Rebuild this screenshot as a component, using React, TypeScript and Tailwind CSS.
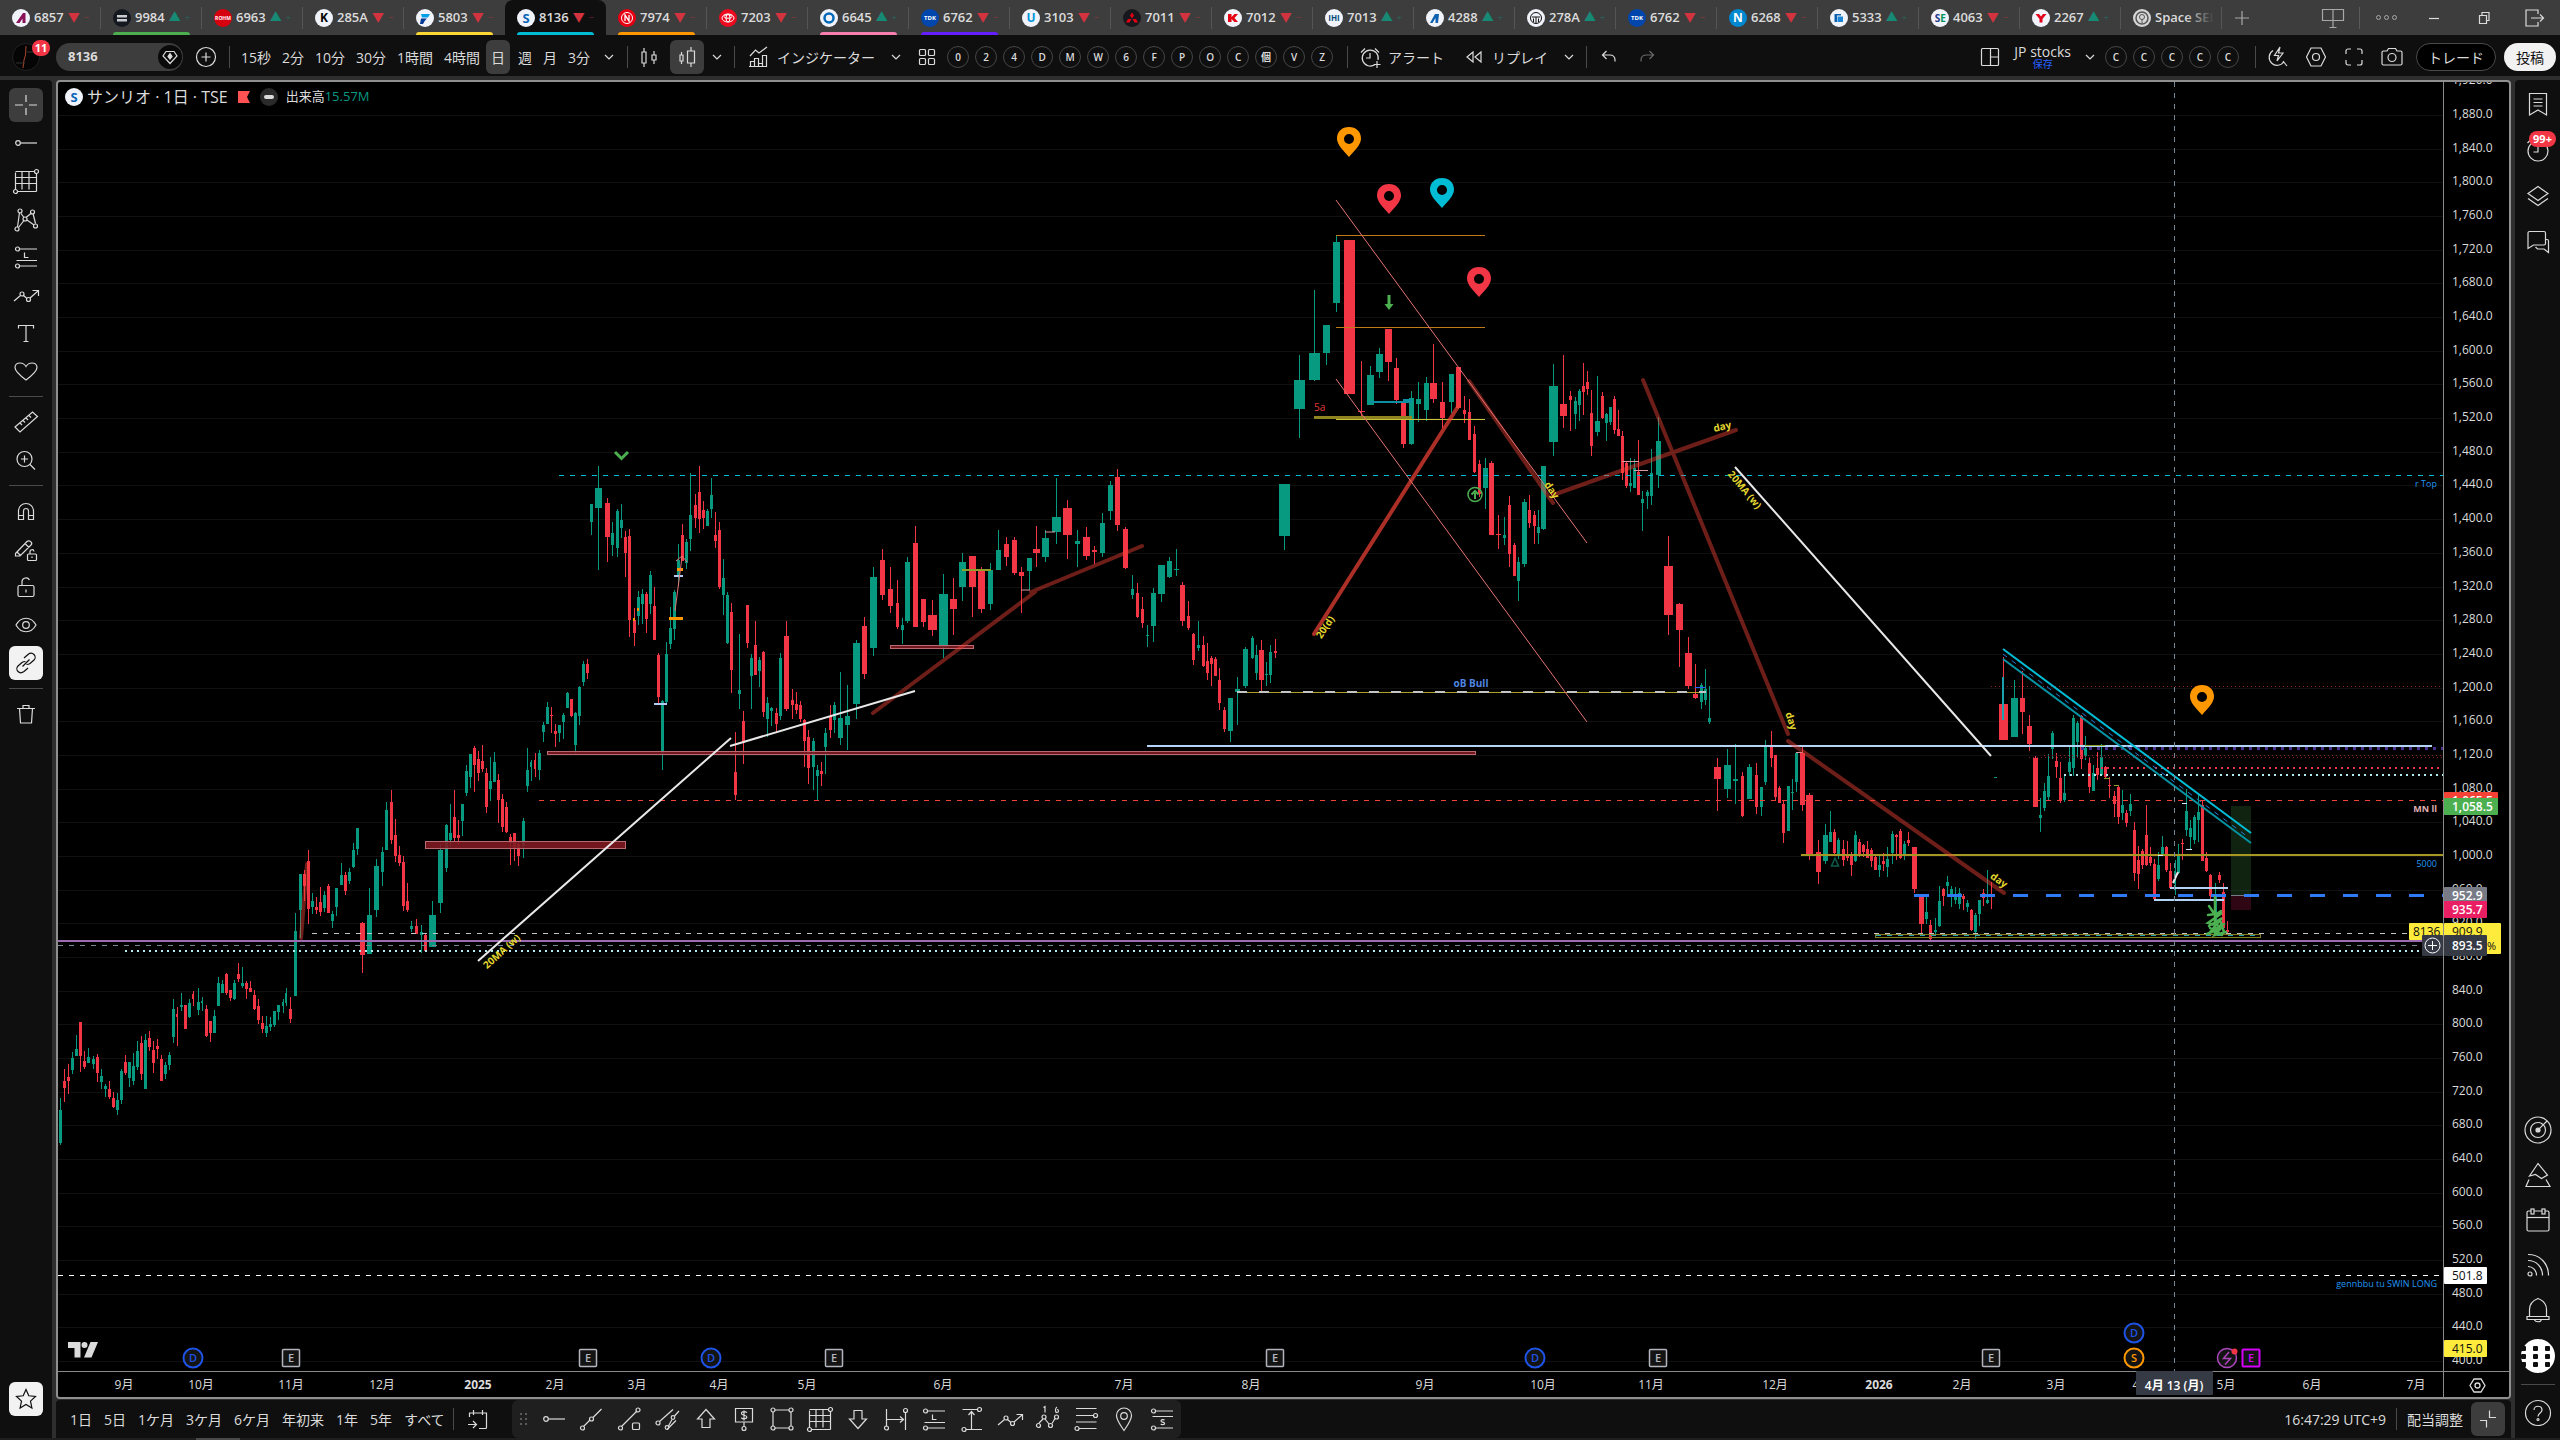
import type { ReactNode } from 'react';
import clsx from 'clsx';

const UP = '#089981';
const DOWN = '#f23645';

/* ---------- icons, all on a 28 grid ---------- */

const ICONS: Record<string, ReactNode> = {
  cross: <path d="M14 4v7M14 17v7M3 14h8M17 14h8" />,
  hline: (
    <>
      <circle cx="6" cy="14" r="2.3" />
      <path d="M8.3 14H25" />
    </>
  ),
  fibgrid: (
    <>
      <path d="M3.5 5.5v17M10 4.5v18M17 4.5v18M24.5 6.5v18M3.5 4.5h19M3.5 10.5h21M3.5 16.5h21M5.5 24.5h19" />
      <circle cx="24.5" cy="4.5" r="2" />
      <circle cx="3.5" cy="24.5" r="2" />
    </>
  ),
  pattern: (
    <>
      <path d="M5.5 22L7.5 7.5M9 8.500l3 4M14 12.5l5.500-4.500M6.500 22.500l5.500-7M15 15l7 5M21 8.500l2.500 10" />
      <circle cx="8" cy="6" r="2" />
      <circle cx="20.5" cy="7" r="2" />
      <circle cx="5" cy="24" r="2" />
      <circle cx="23.5" cy="21" r="2" />
      <circle cx="13" cy="14" r="2" />
    </>
  ),
  longpos: (
    <>
      <path d="M7.5 6H25M4.5 17.5H25M7.5 23H25M12.5 9.5v5h4" />
      <circle cx="5.5" cy="6" r="2" />
      <circle cx="5.5" cy="23" r="2" />
    </>
  ),
  shortpos: (
    <>
      <path d="M7.5 6H25M4.5 11.5H25M7.5 23H25" />
      <path d="M16.5 15.200c-.5-.8-3.500-1-3.500.7 0 1.600 3.600.9 3.600 2.600 0 1.600-3.200 1.500-3.800.4" />
      <circle cx="5.5" cy="6" r="2" />
      <circle cx="5.5" cy="23" r="2" />
    </>
  ),
  zigzag: (
    <>
      <path d="M2 20l6.5-5.5M11.5 14.5l3.5 3M18 17l8-7M20.5 9.5H26.5V15" />
      <circle cx="10" cy="13" r="2" />
      <circle cx="16.5" cy="18.5" r="2" />
    </>
  ),
  text: <path d="M6.5 9.5v-3h15v3M14 6.5v16M11.5 22.5h5" />,
  heart: <path d="M14 23C8 18.5 3 14.5 3 10.5 3 8 5 6 8 6c2.5 0 4.5 1 6 3.5C15.5 7 17.5 6 20 6c3 0 5 2 5 4.5 0 4-5 8-11 12.5z" />,
  ruler: <path d="M3 19L20.5 4l5 4.5L8 24zM8 15l2 2M11 12.5l2 2M14 10l2 2M17 7.5l2 2" />,
  zoomin: (
    <>
      <circle cx="12.5" cy="13" r="7.5" />
      <path d="M18 18.5l5 5M9 13h7M12.5 9.5v7" />
    </>
  ),
  magnet: <path d="M6.5 22.5V14a7.5 7.5 0 0 1 15 0v8.5h-5V14a2.5 2.5 0 0 0-5 0v8.5zM6.5 18.5h5M16.5 18.5h5" />,
  penlock: (
    <>
      <path d="M3.5 18.5L15 6.5c1-1 3-1 4 .5 1 1 .5 2.5 0 3L8 21H3.5zM13 8.5l4 4M5 17l3.5 3.5" />
      <rect x="15.5" y="19" width="9" height="6.5" rx="1" />
      <path d="M18 19v-2a2 2 0 0 1 4-.5M20 21.5v1.5" />
    </>
  ),
  lock: (
    <>
      <rect x="6" y="12.5" width="16" height="11" rx="1.5" />
      <path d="M10 12.5V8.5a4 4 0 0 1 7.5-1.5M14 16.5v3" />
    </>
  ),
  eye: (
    <>
      <path d="M4 14c5-9 15-9 20 0-5 9-15 9-20 0z" />
      <circle cx="14" cy="14" r="3.3" />
    </>
  ),
  link: <path d="M12 9l4-3.5c2-1.6 4.5-1.5 6 0s1.5 4 0 5.5l-4 3.5c-1 .8-2 1-3.5 1M16 19l-4 3.5c-2 1.5-4.5 1.5-6 0s-1.5-4 0-5.500l4-3.5c1-.8 2-1 3.5-1M10.5 17.5l7-7" />,
  trash: <path d="M5 8.5h18M11 8.5v-3h6v3M7.5 8.5l1 14.5h11l1-14.5" />,
  star: <path d="M14 4.5l2.800 6.300 6.700.7-5 4.600 1.400 6.900-5.900-3.500L8.100 23l1.400-6.900-5-4.600 6.700-.7z" />,
  watchlist: <path d="M5.5 3.5h17v21.5l-8.500-5-8.500 5zM9.5 9h9M9.5 12.5h9M9.5 16h9" />,
  clock: (
    <>
      <circle cx="14" cy="15" r="10" />
      <path d="M14 9v7H9.5M3.5 7l3.5-3.5" />
    </>
  ),
  layers: <path d="M14 4.5l10 7-10 7-10-7zM4 16.5l10 7 10-7" />,
  chat: <path d="M5.5 3.5h14.5a1.5 1.5 0 0 1 1.5 1.5v10.5a1.5 1.5 0 0 1-1.500 1.5H9.5L4 20.5V5a1.5 1.5 0 0 1 1.5-1.5zM21.5 11.5h1.5a1.5 1.5 0 0 1 1.5 1.5v11.5l-4.500-3.500h-6.5l-2-2" />,
  radar: (
    <>
      <circle cx="14" cy="14" r="13" />
      <circle cx="14" cy="14" r="7.5" />
      <path d="M14 14l9-9" />
      <circle cx="14" cy="14" r="2" fill="currentColor" />
    </>
  ),
  ideas: <path d="M14 2.500L5.500 15l6-1.500 6 4L23.500 14zM5 18.5L2 25.500h24l-4-7" />,
  calendar: (
    <>
      <rect x="3" y="5" width="22" height="20" rx="1.5" />
      <path d="M3 11.5h22" />
      <rect x="7" y="3" width="3" height="5" fill="#0f0f0f" />
      <rect x="18" y="3" width="3" height="5" fill="#0f0f0f" />
    </>
  ),
  feed: (
    <>
      <path d="M4 3.5c12 0 20.5 9 20.5 21M4 9.5c8.5 0 14.5 6.5 14.5 15M4 15.5c5 0 8.5 4 8.5 9" />
      <circle cx="6" cy="23" r="2" />
    </>
  ),
  bell: <path d="M5.5 20.5v-7C5.5 8 9 4.5 14 2.5c5 2 8.5 5.5 8.5 11v7M3 20.5h22v3H3zM10.5 23.5c.5 3 6.5 3 7 0" />,
  help: (
    <>
      <circle cx="14" cy="14" r="12.5" />
      <path d="M10 11c0-5 8-5 8 0 0 3-4 3-4 6.5" />
      <circle cx="14" cy="20.5" r="1" />
    </>
  ),
  candles: <path d="M9 5v4M9 20v4M7 9h4v11H7zM19 8v4M19 17v4M17 12h4v5h-4z" />,
  candles2: <path d="M8.5 9v3M8.5 18v3M7 12h3v6H7zM18 4v4M18 20v4M14.5 8h7v12h-7z" />,
  indicator: <path d="M5 13l5.5-6 3.5 3 8-6M5.5 23.5v-5h4v5zM9.5 23.5v-8h4v8M13.5 20.5h4v3M17.5 23.5V12.5h4v11zM4 23.5h18" />,
  tiles: (
    <>
      <rect x="6.5" y="6.5" width="6" height="6" rx="1" />
      <rect x="15.5" y="6.5" width="6" height="6" rx="1" />
      <rect x="6.5" y="15.5" width="6" height="6" rx="1" />
      <rect x="15.5" y="15.5" width="6" height="6" rx="1" />
    </>
  ),
  alert: <path d="M19 21.5a8 8 0 1 1 3-4.5M14 10v5h-4M5 9.5l4-4M23 9.5l-4-4M21 18v7M17.5 21.5h7" />,
  rewind: <path d="M13 9l-6 5 6 5zM21 9l-6 5 6 5z" />,
  undo: <path d="M11.5 8l-4 4 4 4M7.5 12h7c3.5 0 5.5 2 5.5 5v1.5" />,
  redo: <path d="M16.5 8l4 4-4 4M20.5 12h-7c-3.5 0-5.5 2-5.5 5v1.5" />,
  layout: <path d="M5.5 6.5a1 1 0 0 1 1-1h15a1 1 0 0 1 1 1v15a1 1 0 0 1-1 1h-15a1 1 0 0 1-1-1zM14.5 5.5v17M14.5 14h8" />,
  quick: <path d="M9 7.5a8 8 0 1 0 11 11M19 18l4 5M16 4l-5.500 8.500h4L13 18l6-8h-4.500z" />,
  hex: (
    <>
      <path d="M9 5h10l4.5 9-4.5 9H9l-4.500-9z" />
      <circle cx="14" cy="14" r="3.5" />
    </>
  ),
  full: <path d="M6 11V8a2 2 0 0 1 2-2h3M17 6h3a2 2 0 0 1 2 2v3M22 17v3a2 2 0 0 1-2 2h-3M11 22H8a2 2 0 0 1-2-2v-3" />,
  camera: (
    <>
      <path d="M4 9.5a1.5 1.5 0 0 1 1.5-1.5H9l1.5-2.500h7L19 8h3.5A1.5 1.5 0 0 1 24 9.5v11a1.5 1.5 0 0 1-1.5 1.5h-17A1.5 1.5 0 0 1 4 20.5z" />
      <circle cx="14" cy="14.5" r="4" />
    </>
  ),
  chevron: <path d="M10 12l4 4 4-4" />,
  goto: <path d="M5.5 12V8h17v14.5a1 1 0 0 1-1 1H15M9.5 5v5M18.5 5v5M4 19.5h8M9 16l3.5 3.5L9 23" />,
  trend: (
    <>
      <path d="M5.5 21.5L12 15M15 12.5L23.5 4" />
      <circle cx="4.5" cy="23" r="2" />
      <circle cx="13.5" cy="14" r="2" />
    </>
  ),
  angle: (
    <>
      <path d="M5.5 21.5L21 6" />
      <circle cx="4.5" cy="23" r="2" />
      <circle cx="22" cy="5" r="2" />
      <rect x="16.5" y="18" width="7" height="6.5" rx="1" />
    </>
  ),
  channel: (
    <>
      <path d="M5.500 16.500L19 4.500M14.500 21L18 14.500M20.500 11L25 6M13 24.500l9-9" />
      <circle cx="4" cy="18" r="2" />
      <circle cx="19" cy="12.5" r="1.8" />
      <circle cx="13" cy="22.5" r="1.8" />
    </>
  ),
  arrowup: <path d="M14 4.5l8.5 9.5H18v8.5h-8V14H5.5z" />,
  arrowdown: <path d="M14 23.5L5.5 14H10V5.5h8V14h4.5z" />,
  price: (
    <>
      <path d="M5.5 3.5h17v13.5h-17zM14 17v4.500M16.800 7.800c-1-1.600-5.300-1.500-5.300.6 0 2.500 5.300 1.200 5.300 3.700 0 2.200-4.500 2.200-5.500.5M14 5.5v10" />
      <circle cx="14" cy="23.5" r="2" />
    </>
  ),
  rect: (
    <>
      <path d="M5 7v14M23 7v14M7 5h14M7 23h14" />
      <circle cx="5" cy="5" r="2" />
      <circle cx="23" cy="5" r="2" />
      <circle cx="5" cy="23" r="2" />
      <circle cx="23" cy="23" r="2" />
    </>
  ),
  daterange: (
    <>
      <path d="M4.5 4v17.5M23.5 7v18M5 14.5h16M18 11.5l3.5 3-3.500 3" />
      <circle cx="4.5" cy="23" r="2" />
      <circle cx="23.5" cy="5.5" r="2" />
    </>
  ),
  pricerange: (
    <>
      <path d="M4.5 4.5h15M8 24.5h16M13.5 24.5V7M10.5 10l3-3.5 3 3.5" />
      <circle cx="21.5" cy="4.5" r="2" />
      <circle cx="6" cy="24.5" r="2" />
    </>
  ),
  elliott: (
    <>
      <path d="M5 18l4-4M11 14l4 5M18 18.500l3-5M9.500 2.500l1.500-1v6M23 2c-2 1-2 5.500 0 5.500s2-3 0-3" />
      <circle cx="4.5" cy="20.5" r="2" />
      <circle cx="10" cy="12" r="2" />
      <circle cx="16.5" cy="20.5" r="2" />
      <circle cx="22.5" cy="12" r="2" />
    </>
  ),
  fib: (
    <>
      <path d="M4 3.5h20.5M4 10.5h17M4 17h20.5M7 23.5h17.5" />
      <circle cx="23.5" cy="10.5" r="2" />
      <circle cx="5" cy="23.5" r="2" />
    </>
  ),
  pin: (
    <>
      <path d="M14 25.5C9.5 19 6.5 15 6.5 10.5a7.5 7.5 0 0 1 15 0c0 4.5-3 8.5-7.500 15z" />
      <circle cx="14" cy="11" r="3.3" />
    </>
  ),
  shrink: <path d="M15.5 5.5v7H22M6 15.5h6.5v7" />,
  monitor: <path d="M3.500 5.500h21v11h-21zM14 5.500v18M10.5 23.5h7" />,
  minimize: <path d="M9 14.5h10" />,
  restore: <path d="M9.5 11.5h7v8h-7zM12 11.5v-3h7v8h-2.5" />,
  exit: <path d="M18 10V6H6v16h12v-4M11 14h12M20 10.5l3.5 3.5-3.500 3.5" />,
  plus: <path d="M14 7v14M7 14h14" />,
};

function Icon({ name, className = 'h-7 w-7' }: { name: string; className?: string }) {
  return (
    <svg viewBox="0 0 28 28" className={clsx('shrink-0', className)} fill="none" stroke="currentColor" strokeWidth="1.2" aria-hidden="true">
      {ICONS[name]}
    </svg>
  );
}

function IconButton({ name, label, className }: { name: string; label: string; className?: string }) {
  return (
    <button type="button" aria-label={label} className={clsx('flex shrink-0 items-center justify-center', className)}>
      <Icon name={name} />
    </button>
  );
}

function Divider({ className }: { className?: string }) {
  return <div className={clsx('h-[22px] w-px shrink-0 bg-[#4a4a4a]', className)} />;
}

/* ---------- tabs ---------- */

type Tab = { code: string; up?: boolean; bar?: string; active?: boolean; bg: string; logo: ReactNode };

const mark = (t: string, fill: string, size = 12) => (
  <text x="9" y={9 + size * 0.36} textAnchor="middle" fontSize={size} fontWeight="700" fill={fill}>
    {t}
  </text>
);
const tdk = mark('TDK', '#fff', 6);

const TABS: Tab[] = [
  { code: '6857', bg: '#f0f3fa', logo: <path d="M4 14l7-10h2.500v10h-3V9.500L7.500 14z" fill="#8a1058" /> },
  { code: '9984', up: true, bar: 'bg-[#4caf50]', bg: '#14181f', logo: <path d="M4 6h10v2.500H4zM4 10h10v2.500H4z" fill="#c8ccd0" /> },
  { code: '6963', up: true, bg: '#d7000f', logo: mark('ROHM', '#fff', 5) },
  { code: '285A', bg: '#f0f3fa', logo: mark('K', '#000', 12) },
  { code: '5803', bar: 'bg-[#fdd835]', bg: '#f0f3fa', logo: <><path d="M5 5h9l-2 3.500H6z" fill="#00a0e9" /><path d="M5 9.500h6l-2 2-2 3.500H4z" fill="#003894" /></> },
  { code: '8136', bar: 'bg-[#00bcd4]', active: true, bg: '#f0f3fa', logo: mark('S', '#0a64b8', 13) },
  { code: '7974', bar: 'bg-[#ff9800]', bg: '#e60012', logo: <><circle cx="9" cy="9" r="5.500" fill="none" stroke="#fff" /><path d="M7 12V6l4 6V6" fill="none" stroke="#fff" strokeWidth="1.300" /></> },
  { code: '7203', bg: '#eb0a1e', logo: <g fill="none" stroke="#fff"><ellipse cx="9" cy="9" rx="6" ry="4" /><ellipse cx="9" cy="9" rx="2" ry="4" /><ellipse cx="9" cy="7.500" rx="4" ry="1.800" /></g> },
  { code: '6645', up: true, bar: 'bg-[#f77fb0]', bg: '#f0f3fa', logo: <circle cx="9" cy="9" r="4.500" fill="none" stroke="#0067b8" strokeWidth="2.500" /> },
  { code: '6762', bar: 'bg-[#651fff]', bg: '#0046ad', logo: tdk },
  { code: '3103', bg: '#f0f3fa', logo: mark('U', '#0095d9', 12) },
  { code: '7011', bg: '#16181d', logo: <path d="M9 3.500l2 3-2 3-2-3zM8.500 10l-2 3.500H3l2-3.500zM9.500 10l2 3.500H15L13 10z" fill="#e60012" /> },
  { code: '7012', bg: '#f0f3fa', logo: <path d="M4 5h3.500v3l3-3H14l-3.500 4 3.500 4h-3.500l-3-3v3H4z" fill="#e60012" /> },
  { code: '7013', up: true, bg: '#f0f3fa', logo: mark('IHI', '#0a4a7a', 8) },
  { code: '4288', up: true, bg: '#f0f3fa', logo: <path d="M4 14l5-9h4l-1 9H9.500V9L6.500 14z" fill="#0d5fb0" /> },
  { code: '278A', up: true, bg: '#f0f3fa', logo: <g fill="none" stroke="#111"><circle cx="9" cy="9" r="5.500" /><path d="M5 8h8M9 8v6M6.500 13V9.500M11.500 13V9.500" /></g> },
  { code: '6762', bg: '#0046ad', logo: tdk },
  { code: '6268', bg: '#0089d0', logo: mark('N', '#fff', 12) },
  { code: '5333', up: true, bg: '#f0f3fa', logo: <><path d="M4.500 5H11v1.500H7V13H4.500z" fill="#0d5fb0" /><path d="M7.500 7.500h5.500V13H7.500z" fill="#1c86d6" /></> },
  { code: '4063', bg: '#f0f3fa', logo: <><text x="6.500" y="12.500" textAnchor="middle" fontSize="10" fontWeight="700" fill="#1d3a8a">S</text><text x="12" y="12.500" textAnchor="middle" fontSize="10" fontWeight="700" fill="#00915a">E</text></> },
  { code: '2267', up: true, bg: '#f0f3fa', logo: <path d="M3.500 5H7l2 2.500L11 5h3.500L10.500 10v3.500h-3V10z" fill="#e3001b" /> },
  { code: 'Space SEI', bg: '#d6d6d6', logo: <g fill="none" stroke="#555"><circle cx="9" cy="9" r="6" strokeWidth="1.500" /><circle cx="9" cy="8" r="2.500" /><path d="M9 10v4" /></g> },
];

function TabBar() {
  return (
    <header className="flex h-[35px] shrink-0 bg-[#3d3d3d]">
      <nav className="flex">
        {TABS.map((t, i) => (
          <button
            key={i}
            type="button"
            className={clsx(
              'relative flex w-[101px] items-center overflow-hidden pl-3 text-[13px] font-semibold whitespace-nowrap text-[#dbdbdb]',
              t.active && 'rounded-t-lg bg-[#0f0f0f]',
            )}
          >
            <svg viewBox="0 0 18 18" className="mr-1 h-[18px] w-[18px] shrink-0">
              <circle cx="9" cy="9" r="9" fill={t.bg} />
              {t.logo}
            </svg>
            {t.code}
            {i < 21 ? (
              <>
                <span className={clsx('ml-1 text-[12px]', t.up ? 'text-[#168a75]' : 'text-[#d3333f]')}>{t.up ? '▲' : '▼'}</span>
                <span className={clsx('ml-1 text-[9px] opacity-40', t.up ? 'text-[#168a75]' : 'text-[#d3333f]')}>{t.up ? '+' : '−'}</span>
              </>
            ) : (
              <span className="absolute inset-y-0 right-2 w-7 bg-linear-to-r from-transparent to-[#3d3d3d]" />
            )}
            {t.bar && <span className={clsx('absolute bottom-0 left-3 h-[3px] w-[77px] rounded-t-sm', t.bar)} />}
            {!t.active && i !== 4 && <span className="absolute top-[7px] right-0 h-[22px] w-px bg-[#555]" />}
          </button>
        ))}
      </nav>
      <div className="flex flex-1 items-center text-[#a8a8a8]">
        <IconButton name="plus" label="新しいタブ" className="ml-1.5 w-7" />
        <div className="ml-auto flex items-center pr-3">
          <IconButton name="monitor" label="モニター" className="w-7" />
          <Divider className="ml-3 bg-[#5a5a5a]" />
          <button type="button" aria-label="メニュー" className="ml-3 flex w-7 justify-center gap-[3px]">
            {[0, 1, 2].map((n) => (
              <span key={n} className="h-[5px] w-[5px] rounded-full border border-[#a8a8a8]" />
            ))}
          </button>
          <div className="ml-5 flex gap-[22px] text-[#dbdbdb]">
            <IconButton name="minimize" label="最小化" />
            <IconButton name="restore" label="元に戻す" />
            <IconButton name="exit" label="閉じる" />
          </div>
        </div>
      </div>
    </header>
  );
}

/* ---------- top toolbar ---------- */

const INTERVALS = ['15秒', '2分', '10分', '30分', '1時間', '4時間', '日', '週', '月', '3分'];
const TEMPLATES = ['0', '2', '4', 'D', 'M', 'W', '6', 'F', 'P', 'O', 'C', '個', 'V', 'Z'];

function Rounds({ items }: { items: string[] }) {
  return (
    <div className="flex gap-[6px]">
      {items.map((t, i) => (
        <button key={i} type="button" className="h-[22px] w-[22px] rounded-full border border-[#454545] text-[10px] leading-5 font-semibold">
          {t}
        </button>
      ))}
    </div>
  );
}

function Toolbar() {
  return (
    <div className="flex h-[41px] shrink-0 items-center bg-[#0f0f0f] pt-[3px] pr-1 pl-3 text-[14px] whitespace-nowrap">
      <button type="button" aria-label="アカウント" className="relative h-7 w-7 shrink-0">
        <svg viewBox="0 0 28 28" className="h-7 w-7">
          <circle cx="14" cy="14" r="13.5" fill="#050505" stroke="#222" />
          <path d="M11 25l1-8 1.5-5L14 3" fill="none" stroke="#a8452c" />
          <path d="M4 20h9M15 9h9" stroke="#333" />
        </svg>
        <span className="absolute -top-[3px] left-5 h-4 w-[18px] rounded-full bg-[#f23645] text-[11px] leading-4 font-bold text-white">11</span>
      </button>
      <label className="ml-4 flex h-7 w-[127px] shrink-0 items-center rounded-full bg-[#3d3d3d] pr-px pl-3">
        <input aria-label="シンボル検索" defaultValue="8136" className="w-[90px] bg-transparent text-[13px] font-bold outline-none" />
        <span className="flex h-6 w-6 items-center justify-center rounded-full bg-[#0a0a0a]">
          <svg viewBox="0 0 18 18" className="h-[18px] w-[18px]" fill="none" stroke="currentColor" strokeWidth="1.2">
            <path d="M5 3.5h8L16 8l-7 7.5L2 8z" />
            <path d="M9 5.5L11 8.5 9 11 7 8.5z" fill="currentColor" />
          </svg>
        </span>
      </label>
      <button type="button" aria-label="比較" className="ml-3 h-[22px] w-[22px] shrink-0">
        <svg viewBox="0 0 22 22" fill="none" stroke="currentColor" strokeWidth="1.2">
          <circle cx="11" cy="11" r="9.5" />
          <path d="M11 6.5v9M6.5 11h9" />
        </svg>
      </button>
      <Divider className="ml-3" />
      <div className="ml-1.5 flex gap-px">
        {INTERVALS.map((t) => (
          <button key={t} type="button" className={clsx('h-[34px] rounded-md px-[5px]', t === '日' && 'mr-0.5 bg-[#3d3d3d]')}>
            {t}
          </button>
        ))}
      </div>
      <IconButton name="chevron" label="時間足" className="w-7" />
      <Divider className="ml-1" />
      <IconButton name="candles" label="ローソク足" className="ml-1 h-[34px] w-[34px]" />
      <IconButton name="candles2" label="出来高ローソク" className="ml-1 h-[34px] w-[34px] rounded-md bg-[#3d3d3d]" />
      <IconButton name="chevron" label="チャートタイプ" className="w-[26px]" />
      <Divider className="ml-1" />
      <button type="button" className="ml-2.5 flex items-center gap-1">
        <Icon name="indicator" />
        インジケーター
      </button>
      <IconButton name="chevron" label="お気に入り" className="ml-2 w-[26px]" />
      <IconButton name="tiles" label="テンプレート" className="mr-1.5 ml-1" />
      <Rounds items={TEMPLATES} />
      <Divider className="ml-3.5" />
      <button type="button" className="ml-2 flex items-center gap-1">
        <Icon name="alert" />
        アラート
      </button>
      <button type="button" className="ml-4 flex items-center gap-1">
        <Icon name="rewind" />
        リプレイ
      </button>
      <IconButton name="chevron" label="リプレイ設定" className="ml-2 w-[26px]" />
      <Divider className="ml-1" />
      <IconButton name="undo" label="元に戻す" className="ml-2" />
      <IconButton name="redo" label="やり直す" className="ml-2.5 text-[#6a6a6a]" />

      <div className="ml-auto flex items-center">
        <IconButton name="layout" label="レイアウト" />
        <button type="button" className="ml-2.5 text-center text-[14px] leading-[14px]">
          JP stocks
          <span className="block text-[10px] leading-[10px] text-[#2962ff]">保存</span>
        </button>
        <IconButton name="chevron" label="レイアウト管理" className="mr-0.5 ml-1.5 w-[26px]" />
        <Rounds items={['C', 'C', 'C', 'C', 'C']} />
        <Divider className="mr-2 ml-4" />
        <div className="flex gap-2.5">
          <IconButton name="quick" label="クイック検索" />
          <IconButton name="hex" label="設定" />
          <IconButton name="full" label="全画面" />
          <IconButton name="camera" label="スナップショット" />
        </div>
        <button type="button" className="ml-2.5 h-7 w-20 rounded-full border border-[#4a4a4a] bg-black">トレード</button>
        <button type="button" className="ml-2 h-7 w-[52px] rounded-full bg-[#f2f2f2] text-[#0f0f0f]">投稿</button>
      </div>
    </div>
  );
}

/* ---------- sidebars ---------- */

const TOOLS = [
  ['cross', 'hline', 'fibgrid', 'pattern', 'longpos', 'zigzag', 'text', 'heart'],
  ['ruler', 'zoomin'],
  ['magnet', 'penlock', 'lock', 'eye', 'link'],
  ['trash'],
];

function LeftBar() {
  return (
    <aside className="flex w-[52px] shrink-0 flex-col items-center rounded-tr-sm bg-[#0f0f0f] pt-2 pb-[22px]">
      {TOOLS.map((group, g) => (
        <div key={g} className={clsx('flex flex-col gap-1', g > 0 && 'mt-2 border-t border-[#4a4a4a] pt-2')}>
          {group.map((n) => (
            <IconButton
              key={n}
              name={n}
              label={n}
              className={clsx('h-[34px] w-[34px] rounded-md', n === 'cross' && 'bg-[#3d3d3d]', n === 'link' && 'bg-[#f2f2f2] text-[#0f0f0f]')}
            />
          ))}
        </div>
      ))}
      <IconButton name="star" label="お気に入りツール" className="mt-auto h-[34px] w-[34px] rounded-md bg-[#f2f2f2] text-[#0f0f0f]" />
    </aside>
  );
}

function RightBar() {
  return (
    <aside className="flex w-[45px] shrink-0 flex-col items-center rounded-tl-sm bg-[#0f0f0f] pt-px pb-0.5">
      {['watchlist', 'clock', 'layers', 'chat'].map((n) => (
        <div key={n} className="relative">
          <IconButton name={n} label={n} className="h-[46px] w-[45px]" />
          {n === 'clock' && (
            <span className="absolute top-1 left-[14px] h-4 w-[27px] rounded-full bg-[#f23645] text-center text-[11px] leading-4 font-bold text-white">99+</span>
          )}
        </div>
      ))}
      <div className="mt-auto flex flex-col items-center">
        {['radar', 'ideas', 'calendar', 'feed', 'bell'].map((n) => (
          <IconButton key={n} name={n} label={n} className="h-[45px] w-[45px]" />
        ))}
        <button type="button" aria-label="アプリ" className="mt-[7px] mb-[6px] grid h-[34px] w-[34px] grid-cols-3 content-center justify-center gap-[3px] rounded-full bg-white">
          {Array.from({ length: 9 }, (_, i) => (
            <span key={i} className="h-[5px] w-[5px] rounded-[1px] bg-[#0f0f0f]" />
          ))}
        </button>
        <div className="my-[5px] h-px w-[34px] bg-[#4a4a4a]" />
        <IconButton name="help" label="ヘルプ" className="h-[46px] w-[45px]" />
      </div>
    </aside>
  );
}

/* ---------- bottom bar ---------- */

const RANGES = ['1日', '5日', '1ケ月', '3ケ月', '6ケ月', '年初来', '1年', '5年', 'すべて'];
const FAVORITES = ['hline', 'trend', 'angle', 'channel', 'arrowup', 'price', 'rect', 'fibgrid', 'arrowdown', 'daterange', 'longpos', 'pricerange', 'zigzag', 'elliott', 'fib', 'pin', 'shortpos'];

function BottomBar() {
  return (
    <footer className="mt-px flex h-[38px] shrink-0 items-center rounded-t-sm bg-[#0f0f0f] pr-1.5 pl-2 text-[14px] whitespace-nowrap">
      <div className="flex">
        {RANGES.map((t) => (
          <button key={t} type="button" className="h-[34px] px-1.5">
            {t}
          </button>
        ))}
      </div>
      <Divider className="ml-0.5" />
      <IconButton name="goto" label="日付へ移動" className="ml-2.5" />
      <div className="ml-5 flex h-[38px] items-center rounded-md bg-[#1f1f1f]">
        <div className="mx-2 grid grid-cols-2 gap-[3px]">
          {Array.from({ length: 6 }, (_, i) => (
            <span key={i} className="h-0.5 w-0.5 bg-[#5a5a5a]" />
          ))}
        </div>
        {FAVORITES.map((n) => (
          <IconButton key={n} name={n} label={n} className="h-[38px] w-[38px]" />
        ))}
      </div>
      <span className="ml-auto">16:47:29 UTC+9</span>
      <Divider className="mx-2.5" />
      <button type="button">配当調整</button>
      <IconButton name="shrink" label="最大化" className="ml-2 h-[34px] w-[34px] rounded-md bg-[#3d3d3d]" />
    </footer>
  );
}

/* ---------- chart ---------- */

// Each run of bars keeps its own origin and units per pixel.
// A bar is: colour+centre, width, high, body top, body bottom, low.
const RUNS = [
  {
    x: 50, y: 700, kx: 2.45, ky: 3,
    bars: `g25 7 1193 1230 1329 1335,r36 7 1107 1143 1164 1206,r45 7 1092 1131 1143 1182,g55 7 1056 1074 1110 1122,g65 7 1005 1047 1068 1068,r74 7 966 966 1068 1116,r84 7 1053 1083 1101 1107,g94 7 1044 1071 1089 1089,g106 7 1068 1077 1092 1107,r116 7 1062 1071 1119 1146,g126 7 1107 1128 1146 1167,g136 7 1152 1158 1167 1191,r146 7 1143 1167 1191 1197,r155 7 1176 1194 1221 1224,g165 7 1179 1200 1230 1245,g175 7 1107 1113 1200 1212,r185 7 1065 1086 1119 1125,g194 7 1086 1086 1134 1161,g204 7 1059 1098 1143 1155,g214 7 1023 1053 1101 1110,r224 7 1008 1029 1122 1140,g234 8 1002 1020 1167 1167,r243 7 993 1014 1041 1053,r253 7 1023 1050 1089 1119,r263 7 1017 1038 1047 1077,r273 7 1065 1077 1143 1143,g283 7 1086 1095 1122 1137,g293 7 1056 1065 1095 1110,
g302 7 897 927 1011 1029,r312 6 921 942 951 1038,g322 7 879 915 921 933,r332 7 915 915 987 987,g341 7 897 909 951 954,r351 6 873 882 897 918,g363 7 864 906 930 945,g373 6 891 903 909 933,r383 7 915 927 1008 1011,r393 7 963 963 999 1026,g403 7 930 948 999 999,g412 7 831 849 918 918,g422 7 840 852 879 879,r432 7 819 822 879 885,r442 7 870 870 894 903,g452 7 840 849 897 900,r462 7 789 822 837 846,g471 7 801 849 858 864,r481 7 843 849 867 897,r491 7 843 864 876 876,r501 7 870 885 927 930,r510 7 897 918 960 972,r520 7 948 969 987 999,g530 7 948 978 999 1011,g540 7 951 972 981 993,g550 7 933 933 975 981,g560 7 915 915 936 960,g570 6 897 906 918 939,g579 6 864 879 909 918,r589 7 891 927 957 969,
g601 7 639 693 888 888,g613 7 522 522 630 714,r623 7 510 522 558 603,r633 7 450 483 627 672,g643 7 579 603 621 642,r653 7 591 621 630 642,r662 7 561 606 636 648,g672 7 573 585 624 636,r682 7 552 558 639 639,g692 8 633 642 663 684,g702 8 564 564 621 648,g714 7 489 525 555 555,r724 8 516 525 573 585,g733 7 504 516 543 552,g743 7 429 450 501 504,g753 7 384 384 447 465,r765 13 666 669 765 819,g783 12 564 645 762 762,g800 12 477 498 630 651,g814 7 441 456 516 558,g824 7 306 330 450 450,r836 7 270 306 420 432,r846 7 357 405 468 486,r856 7 438 465 489 498,r866 7 468 486 618 633,r876 7 549 603 630 636,g885 7 663 678 687 696,r898 8 657 678 702 702,g910 7 675 696 705 759,r920 8 699 705 753 756,
g937 17 603 645 741 741,g957 12 432 450 609 639,g971 7 372 375 504 516,g981 7 312 399 420 441,r991 7 270 351 414 423,r1001 7 360 405 414 435,g1010 7 312 312 363 408,g1020 7 195 213 279 288,g1030 7 162 162 231 264,r1040 7 138 144 195 276,r1050 7 153 177 219 243,r1060 7 135 183 207 216,r1069 8 204 219 321 339,g1079 8 171 243 267 303,g1089 8 156 186 246 246,r1098 8 222 240 300 369,r1108 7 282 297 381 396,r1118 7 306 321 396 399,r1128 7 402 411 429 495,r1138 7 399 399 447 483,r1148 7 423 432 468 498,g1160 7 354 363 438 474,g1170 8 144 210 258 276,g1179 6 180 186 201 243,r1189 6 159 180 207 231,g1199 7 150 159 210 240`,
  },
  {
    x: 540, y: 440, kx: 2.45, ky: 3,
    bars: `g8 7 846 855 876 906,g18 7 786 801 852 852,r28 7 801 825 828 879,r38 7 852 873 882 921,g47 7 855 855 879 906,g57 7 819 825 846 897,g67 7 756 759 804 804,r77 8 777 777 828 831,g87 7 816 819 915 942,g96 7 738 741 828 855,g106 7 663 672 726 738,r116 7 657 672 699 717,g126 8 192 192 246 285,g143 17 78 144 204 390,r165 12 174 189 291 366,g178 7 246 279 315 348,g190 8 207 213 324 351,g199 7 192 240 264 294,r209 7 273 291 339 411,r219 7 267 288 540 591,r231 7 504 540 579 618,g241 7 453 471 528 555,g251 8 447 462 492 552,r261 8 456 462 537 579,g270 7 393 405 492 522,r280 7 441 498 600 600,r290 7 639 645 771 789,g300 8 780 783 939 990,g310 8 606 642 786 789,g320 7 501 564 612 627,g330 7 450 456 567 600,
g339 7 312 360 405 438,r349 8 252 285 363 363,g359 8 297 306 369 387,g368 7 99 225 297 333,r381 8 162 195 234 264,r391 7 78 156 237 279,r400 7 183 210 234 267,g410 7 207 213 258 258,g420 8 114 165 207 234,r430 8 216 285 303 324,r439 7 246 270 441 447,g449 7 357 414 465 525,g459 7 456 465 609 612,r469 8 489 516 690 759,r479 8 876 996 1065 1080,g488 7 582 750 762 807,r498 7 813 843 909 972,r508 7 495 495 609 624,g518 8 642 654 708 807,r528 8 543 615 705 705,g537 7 651 660 693 741,r547 7 633 636 816 831,g557 7 771 789 837 891,g567 7 801 804 813 858,r579 7 804 819 852 876,g589 7 639 654 828 840,r604 12 543 588 807 813,r618 7 747 780 795 837,r628 7 756 792 810 822,r638 7 783 795 837 846,
r648 8 837 840 903 981,r657 7 870 891 984 1032,g670 8 894 903 981 1050,g680 8 975 990 1008 1080,r690 7 966 993 1002 1038,g699 7 864 879 921 1002,r711 7 795 828 870 894,g721 7 786 795 840 879,g736 12 696 834 894 915,g753 12 735 828 855 930,g775 17 600 609 792 837,r795 12 531 558 702 717,g817 18 381 411 624 648,r839 12 327 360 465 480,r859 12 381 447 498 519,r876 8 420 489 561 567,g888 8 534 555 570 612,g900 12 351 366 543 549,r920 12 258 309 561 561,r939 13 477 477 546 561,r962 22 480 525 570 588,g989 22 402 462 621 654,r1013 18 414 477 507 585,g1035 17 339 366 441 483,r1059 17 348 348 441 531,r1081 17 381 387 507 519,g1104 12 369 390 492 510,g1123 12 270 330 390 390,
r1143 12 291 312 351 378,r1162 12 291 300 399 405,r1180 12 381 396 408 519,g1199 12 354 354 393 450,r1216 17 258 327 339 381,g1238 17 270 294 351 366,g1265 22 114 231 276 312,r1292 22 180 204 285 357,g1317 12 270 303 312 381,r1338 17 261 291 348 360,r1358 13 318 330 336 372,g1378 12 219 249 339 351,g1398 12 123 135 213 240,r1415 12 87 111 255 273,r1434 13 261 267 384 387,g1451 7 405 447 465 477,r1464 8 429 459 531 534,r1476 8 471 507 549 564,g1488 7 555 585 588 621,g1503 12 444 459 558 606,g1522 17 375 375 462 486,g1542 12 351 363 411 414,g1560 13 327 387 390 408`,
  },
  {
    x: 1180, y: 110, kx: 2.8, ky: 2.45,
    bars: `r6 15 1156 1164 1252 1263,r24 8 1203 1240 1269 1274,r38 8 1281 1284 1347 1360,g52 8 1252 1311 1318 1325,r66 8 1289 1311 1362 1365,r77 8 1306 1350 1379 1396,r88 8 1338 1343 1357 1411,r99 8 1340 1345 1387 1387,r110 8 1367 1396 1453 1470,r125 9 1463 1470 1517 1524,g141 14 1441 1441 1521 1548,g161 14 1389 1419 1426 1507,g183 14 1316 1321 1411 1416,g203 8 1289 1294 1343 1345,g214 8 1311 1335 1379 1396,r228 14 1298 1323 1396 1423,g242 8 1352 1382 1384 1411,g253 8 1311 1328 1384 1404,r267 9 1296 1325 1330 1343,g292 31 916 916 1044 1078,g334 31 600 661 733 804,g376 31 441 595 661 664,g410 20 527 527 595 625,g438 20 307 323 473 495,r474 31 318 318 696 696,r508 20 615 737 741 750,g533 19 627 649 723 723,g558 19 583 598 642 657,r584 20 537 537 617 664,
r606 14 608 632 710 720,r626 14 708 713 818 828,g648 14 688 706 818 821,g668 14 666 708 720 764,g690 14 654 669 735 762,r710 20 573 669 708 718,r735 14 666 715 755 779,g760 14 647 647 715 742,r780 14 629 629 730 733,r797 9 701 735 745 767,r811 9 708 740 808 808,r825 9 774 794 887 889,r838 9 857 867 941 948,g855 13 853 877 926 978,r872 14 860 865 1041 1041,r892 14 992 1039 1041 1076,g908 9 997 1041 1049 1066,r923 9 946 968 1088 1120,r936 9 1061 1066 1142 1142,g948 8 1095 1107 1154 1203,g965 14 953 960 1112 1120,r978 9 943 980 1012 1024,r992 8 983 992 1020 1063,g1004 8 980 1022 1036 1063,g1018 14 872 872 1027 1029,g1045 25 622 676 813 848,r1074 20 600 720 750 779,r1093 8 688 701 710 786,g1107 8 703 713 745 782,g1118 8 684 688 723 762,
r1130 8 620 676 691 747,r1141 8 639 666 684 698,r1152 8 686 742 823 848,g1169 14 652 762 789 799,r1183 8 691 701 755 757,g1194 8 742 745 767 811,g1205 8 728 728 765 772,r1216 8 701 708 784 794,r1228 8 735 782 799 799,r1239 8 786 799 889 906,r1250 8 862 865 921 926,g1261 8 853 914 921 936,g1272 8 855 877 926 926,r1284 8 808 887 943 943,g1295 8 933 953 963 1031,g1309 8 931 936 946 978,g1320 8 831 889 946 968,g1340 14 752 811 894 926,r1367 25 1044 1117 1237 1286,r1398 19 1208 1210 1274 1365,r1424 20 1291 1330 1411 1419,r1443 14 1357 1431 1441 1443,g1460 8 1404 1409 1450 1468,g1471 8 1370 1419 1445 1458,g1482 8 1411 1490 1499 1504`,
  },
  {
    x: 1640, y: 540, kx: 3, ky: 3,
    bars: `r232 21 654 681 717 813,g262 21 627 675 747 774,g286 15 612 717 723 792,r307 9 696 708 828 831,g328 15 672 681 777 777,r349 9 669 705 801 822,g364 9 741 741 801 828,g376 9 600 615 726 735,r394 9 573 618 654 681,r406 9 645 645 771 783,r418 9 738 744 789 789,r430 9 783 792 879 909,g445 9 738 738 873 873,g457 9 717 756 759 810,g469 9 639 639 726 756,r487 15 618 639 795 813,r508 21 759 765 948 960,r535 15 900 936 996 1032,g556 15 852 885 963 972,g571 9 813 876 906 906,r583 9 867 876 939 948,g595 9 894 900 945 957,r610 9 900 927 960 978,r622 9 903 945 954 963,r634 9 936 945 975 1008,g646 9 873 885 963 966,r658 9 897 906 945 951,r670 9 912 915 936 951,r682 9 903 927 954 954,r694 9 924 930 963 981,r706 9 942 951 990 990,
g718 9 942 975 990 1011,r730 9 939 963 972 993,g742 9 921 957 981 1011,g757 9 873 882 939 972,r769 9 882 885 891 960,r781 9 867 873 954 957,g793 9 903 912 945 960,r805 9 876 900 909 918,r823 15 921 921 1047 1059,r844 15 1065 1068 1152 1182,g859 9 1071 1116 1137 1152,r871 9 1140 1155 1197 1200,g886 9 1134 1170 1176 1188,g898 9 1038 1083 1158 1161,r910 9 1044 1047 1068 1098,g922 9 1008 1026 1038 1068,g934 9 1038 1047 1071 1101,g946 9 1041 1062 1080 1092,g958 9 1044 1059 1092 1107,r970 9 1062 1068 1077 1110,g982 9 1080 1089 1101 1116,r994 9 1107 1110 1170 1173,g1006 9 1119 1125 1176 1197,g1018 9 1080 1080 1122 1158,r1030 9 1047 1059 1074 1098,g1042 9 990 1080 1089 1092,r1054 3 1026 1026 1026 1107,g1066 9 711 711 714 714,
r1090 27 351 492 600 600,g1123 21 420 474 591 591,r1147 15 393 474 516 582,r1168 15 525 558 612 633,r1186 15 648 654 801 801,g1201 9 774 825 834 876,g1213 9 729 753 804 813,g1225 9 642 708 771 780,g1237 9 573 579 627 657,r1249 9 639 663 681 714,r1261 9 666 714 783 789,g1273 9 708 759 780 786,g1288 9 618 666 696 708,g1300 9 525 534 684 708,g1312 9 543 549 606 654,r1324 9 525 528 657 687,g1336 9 588 624 648 660,r1348 9 651 669 741 759,g1360 9 675 699 753 753,r1372 9 636 684 705 720`,
  },
  {
    x: 1980, y: 620, kx: 2.8, ky: 3,
    bars: `g341 8 372 411 465 465,r351 8 438 441 471 474,r362 8 471 495 498 534,r376 8 513 528 552 591,r388 8 498 501 591 612,g399 8 510 555 579 600,r410 8 570 579 609 621,g421 7 522 552 573 588,r433 9 606 630 759 783,r444 8 678 720 762 807,r455 8 687 693 735 747,r466 7 555 645 735 738,r477 8 681 711 729 738,r489 9 717 732 837 840,g500 8 696 735 777 783,g511 8 648 681 705 705,r522 8 678 681 750 756,r534 8 729 753 804 804,g545 6 720 753 792 825,g556 8 672 702 759 762,r567 8 657 669 672 720,g578 8 507 573 630 648,g589 8 600 624 651 687,g600 8 585 591 660 672,g612 8 525 576 600 666,r623 8 540 555 723 723,r634 8 696 714 753 756,r646 8 762 765 828 837,g659 8 789 828 900 930,r670 8 756 765 780 790,r682 8 789 816 924 936,r693 8 903 930 936 945`,
  },
];

function Candles() {
  return (
    <g shapeRendering="crispEdges">
      {RUNS.map((run) =>
        run.bars.split(',').map((raw) => {
          const bar = raw.trim();
          const [cx, w, high, top, bottom, low] = bar.slice(1).split(' ').map(Number);
          const fill = bar[0] === 'g' ? UP : DOWN;
          const py = (v: number) => Math.round(run.y + v / run.ky);
          const width = Math.max(1, Math.round(w / run.kx));
          const left = Math.round(run.x + cx / run.kx - width / 2);
          return (
            <g key={run.x + bar} fill={fill}>
              <rect x={left + Math.floor(width / 2)} y={py(high)} width="1" height={Math.max(1, py(low) - py(high))} />
              <rect x={left} y={py(top)} width={width} height={Math.max(1, py(bottom) - py(top))} />
            </g>
          );
        }),
      )}
    </g>
  );
}

const PINS = [
  { x: 1349, y: 127, c: '#ff9800' },
  { x: 1389, y: 184, c: DOWN },
  { x: 1442, y: 178, c: '#00bcd4' },
  { x: 1479, y: 267, c: DOWN },
  { x: 2202, y: 685, c: '#ff9800' },
];

const EVENTS = [
  { x: 193, t: 'D' }, { x: 291, t: 'E' }, { x: 588, t: 'E' }, { x: 711, t: 'D' }, { x: 834, t: 'E' },
  { x: 1275, t: 'E' }, { x: 1535, t: 'D' }, { x: 1658, t: 'E' }, { x: 1991, t: 'E' },
  { x: 2134, t: 'D', y: 1333 }, { x: 2134, t: 'S' }, { x: 2251, t: 'E', c: '#d500f9' },
];

const MONTHS: [number, string][] = [
  [124, '9月'], [201, '10月'], [291, '11月'], [382, '12月'], [478, '2025'], [555, '2月'], [637, '3月'], [719, '4月'],
  [807, '5月'], [943, '6月'], [1124, '7月'], [1251, '8月'], [1425, '9月'], [1543, '10月'], [1651, '11月'], [1775, '12月'],
  [1879, '2026'], [1962, '2月'], [2056, '3月'], [2142, '4月'], [2226, '5月'], [2312, '6月'], [2416, '7月'],
];

const priceY = (p: number) => Math.round(115 + (1880 - p) * 0.842);
const PRICES = Array.from({ length: 39 }, (_, i) => 1920 - i * 40);

type TagProps = { y: number; h?: number; w?: number; bg: string; fg?: string; text: string };
function PriceTag({ y, h = 17, w = 43, bg, fg = '#fff', text }: TagProps) {
  return (
    <g>
      <rect x="2444" y={y} width={w} height={h} rx="1" fill={bg} />
      <text x="2452" y={y + 13} fill={fg}>{text}</text>
    </g>
  );
}

function EventBadge({ x, y = 1358, t, c }: { x: number; y?: number; t: string; c?: string }) {
  const color = c ?? (t === 'D' ? '#1e53e5' : t === 'S' ? '#ff9800' : '#b2b5be');
  return (
    <g fill="#141414" stroke={color} strokeWidth="2">
      {t === 'E' ? <rect x={x - 8.5} y={y - 8.5} width="17" height="17" rx="1" strokeWidth={c ? 2 : 1.5} /> : <circle cx={x} cy={y} r="9.5" />}
      <text x={x} y={y + 4} textAnchor="middle" fontSize="11" fontWeight="600" fill={color} stroke="none">{t}</text>
    </g>
  );
}

function Drawings() {
  return (
    <>
      {/* zones */}
      <g fill="#801922" fillOpacity="0.9" stroke="#b86a70">
        <rect x="425.5" y="841.5" width="200" height="7" />
        <rect x="547.5" y="751.5" width="928" height="3" />
        <rect x="890.5" y="645.5" width="83" height="3" />
      </g>
      <rect x="2231" y="806" width="20" height="89" fill="#4caf50" fillOpacity="0.2" />
      <rect x="2231" y="896" width="20" height="14" fill="#e91e63" fillOpacity="0.2" />
      <path d="M2231 895.5h20" stroke="#787b86" />

      {/* horizontal levels */}
      <g fill="none">
        <path d="M559 475.5H2443" stroke="#00bcd4" strokeDasharray="5 6" />
        <path d="M539 800.5H2443" stroke="#f44336" strokeDasharray="5 6" />
        <path d="M312 933.5H2443" stroke="#c4c6cc" strokeDasharray="5 6" />
        <path d="M58 941H2443" stroke="#9c6bb0" strokeWidth="2" />
        <path d="M125 951H2443" stroke="#b2ebf2" strokeWidth="2" strokeDasharray="2 4" />
        <path d="M58 1275.5H2443" stroke="#fff" strokeDasharray="5 6" />
        <path d="M1147 746H2432" stroke="#b3d4f5" strokeWidth="2" />
        <path d="M1801 855H2443" stroke="#a59722" strokeWidth="2" />
        <path d="M1914 895.5H2443" stroke="#2f7bf6" strokeWidth="3" strokeDasharray="15 18" />
        <rect x="1875.5" y="934.5" width="385" height="3" stroke="#857c1f" />
        <path d="M1876 935.5H2260" stroke="#26a6b5" strokeDasharray="5 6" />
        <path d="M1991 686.5H2443M2029 757.5H2443M2044 755.5H2443" stroke="#8b1c2b" strokeDasharray="1 3" />
        <path d="M2081 748.5H2443" stroke="#4a2f8f" strokeWidth="3" strokeDasharray="3 5" />
        <path d="M2101 768H2443" stroke={DOWN} strokeWidth="2" strokeDasharray="2 4" />
        <path d="M2064 775H2443" stroke="#b2ebf2" strokeWidth="2" strokeDasharray="2 4" />
        <path d="M1237 692.5H1706" stroke="#d9c82e" strokeOpacity="0.8" />
        <path d="M1237 692H1706" stroke="#c4c4c4" strokeWidth="2" strokeDasharray="10 12" />
        <path d="M1336 235.5H1485M1336 327.5H1485" stroke="#c07a1a" />
        <path d="M1336 419.5H1485" stroke="#c9c23a" />
        <path d="M1314 417.5h98" stroke="#8f8420" strokeWidth="3" />
        <path d="M1369 402h43M1403 400h9" stroke="#0b8fa3" strokeWidth="2" />
        <path d="M654 704h13M674 576h9" stroke="#b2ccf5" strokeWidth="2" />
        <path d="M669 618.5h14M677 569.5h6M633 619.5h2M637 609.5h2" stroke="#ff9800" strokeWidth="3" />
        <path d="M962 570h29" stroke="#8fa02a" strokeWidth="2" />
        <path d="M1045 532h10M1021 590h9M1622 461.5h17M1634 470.5h14M1796 752.5h7" stroke="#d99a9e" />
        <path d="M2170 888h58M2154 900h70" stroke="#b3d4f5" strokeWidth="2" />
        <path d="M2182 803.5h5M2186 849.5h6M2158 855.5h5" stroke="#d8e6ff" />
        <path d="M2085 745.5h20M2104 778.5h6M2114 785.5h5" stroke="#8fa02a" />
        <path d="M1695 687.5h10" stroke="#2962ff" />
      </g>

      {/* moving-average strokes */}
      <g fill="none" stroke="#f44336" strokeOpacity="0.45" strokeWidth="4" strokeLinecap="round">
        <path d="M873 713L1035 592M1031 592L1142 546" />
        <path d="M1469 381L1553 503M1553 495L1736 430M1643 380L1788 734M1788 741L2004 893" />
        <path d="M301 938L307 864" />
        <path d="M1314 634L1459 405" strokeOpacity="0.7" />
      </g>
      <g fill="none" stroke="#e8e8e8" strokeWidth="2">
        <path d="M478 961L731 738M730 746L915 691M1735 467L1991 756M2173 883L2178 872" />
      </g>
      <g fill="none" stroke="#e57373">
        <path d="M1336 200L1587 543M1336 379L1587 722M675 611L682 557M676 561L682 556L687 562" />
      </g>

      {/* falling channel */}
      <g fill="none">
        <path d="M2003 649L2251 833" stroke="#00bcd4" strokeWidth="2" />
        <path d="M2003 659L2251 843" stroke="#0592a3" strokeWidth="2" />
        <path d="M2003 654L2248 837" stroke="#1e7fd8" strokeDasharray="5 6" />
        <path d="M2003 677V720" stroke="#1aa2b0" strokeWidth="2" />
      </g>

      {/* marks */}
      <g fill="none" stroke="#4caf50" strokeWidth="3">
        <path d="M615 452L621.5 458.5L628 452" />
        <path d="M1389 295v11" />
        <path d="M1384.5 304h9L1389 310z" fill="#4caf50" stroke="none" />
        <circle cx="1475" cy="494.5" r="7" strokeWidth="1.5" />
        <path d="M1475 499v-6M1471.5 494.5L1475 491L1478.5 494.5" strokeWidth="2" />
        <path
          d="M2215 897v38M2209 906l6 9 6-4M2208 915l14-2-14 10 13 3M2209 926l13-8-12 14 14-8M2207 934l14-6-6 7 11-3M2210 928l12 7M2220 920l4 12"
          strokeWidth="2.5"
          strokeLinecap="round"
        />
      </g>
      <path d="M1835 858l3.5 8h-7z" fill="none" stroke="#0b5c4f" strokeWidth="1.5" />
      {PINS.map((p) => (
        <path
          key={p.x}
          transform={`translate(${p.x - 12} ${p.y})`}
          fill={p.c}
          fillRule="evenodd"
          d="M12 0c7 0 12 4.5 12 11.5C24 18 17 24 12 30 7 24 0 18 0 11.5 0 4.5 5 0 12 0zm0 7a5 5 0 1 0 0 10 5 5 0 0 0 0-10z"
        />
      ))}

      {/* captions */}
      <g fontSize="10" fontWeight="700" fill="#e3d62f" textAnchor="middle">
        <text transform="translate(504 954) rotate(-42)">20MA (w)</text>
        <text transform="translate(1328 629) rotate(-56)">20(d)</text>
        <text transform="translate(1549 492) rotate(56)">day</text>
        <text transform="translate(1723 430) rotate(-12)">day</text>
        <text transform="translate(1742 492) rotate(50)">20MA (w)</text>
        <text transform="translate(1788 722) rotate(72)">day</text>
        <text transform="translate(1997 883) rotate(35)">day</text>
      </g>
      <text x="1314" y="411" fontSize="10" fill="#e53935">5a</text>
      <text x="1471" y="687" fontSize="10" fontWeight="700" fill="#4f86e0" textAnchor="middle">oB Bull</text>
      <g fontSize="9" fill="#2196f3" textAnchor="end">
        <text x="2437" y="487">r Top</text>
        <text x="2437" y="867">5000</text>
        <text x="2437" y="1287">gennbbu tu SWIN LONG</text>
        <text x="2437" y="812" fill="#e0b0b4" fontWeight="700">MN ll</text>
      </g>
    </>
  );
}

function Chart() {
  return (
    <svg viewBox="58 82 2451 1315" preserveAspectRatio="none" className="block h-full w-full" fontSize="12" fill="#dbdbdb" role="img" aria-label="サンリオ 日足チャート">
      <path d={PRICES.map((p) => `M58 ${priceY(p) + 0.5}H2443`).join('')} stroke="#101010" />
      <Candles />
      <Drawings />

      {/* crosshair */}
      <path d="M2174.5 82V1371M58 945.5H2443" stroke="#758696" strokeDasharray="5 6" />

      {EVENTS.map((e, i) => (
        <EventBadge key={i} {...e} />
      ))}
      <circle cx="2227" cy="1358" r="9.5" fill="#141414" stroke="#ab47bc" strokeWidth="1.5" />
      <path d="M2229 1352l-5.5 6.5h7l-5.500 6" fill="none" stroke="#ab47bc" strokeWidth="1.5" />
      <circle cx="2234.5" cy="1351.5" r="3" fill={DOWN} />
      <path d="M68 1342h12.5v15.5h-6v-9.5H68zM90.5 1342H98l-6.5 15.5h-7.500z" />
      <circle cx="84.5" cy="1345" r="3" />

      {/* price scale */}
      {PRICES.map((p) => (
        <text key={p} x="2452" y={priceY(p) + 3}>
          {p.toLocaleString('en-US', { minimumFractionDigits: 1 })}
        </text>
      ))}
      <g fontWeight="600">
        <PriceTag y={792} w={54} bg="#f44336" text="1,065.5" />
        <PriceTag y={798} w={54} bg="#4caf50" text="1,058.5" />
        <PriceTag y={887} bg="#787b86" text="952.9" />
        <PriceTag y={901} bg="#e91e63" text="935.7" />
      </g>
      <rect x="2409" y="923" width="34" height="17" rx="1" fill="#ffeb3b" />
      <text x="2413" y="936" fill="#0f0f0f">8136</text>
      <PriceTag y={923} w={57} h={31} bg="#ffeb3b" fg="#0f0f0f" text="909.9" />
      <text x="2496" y="950" fill="#0f0f0f" fontSize="11" textAnchor="end">%</text>
      <rect x="2422" y="935" width="21" height="21" rx="1" fill="#363a45" />
      <path d="M2432.5 941v9M2428 945.5h9" stroke="#fff" />
      <circle cx="2432.5" cy="945.5" r="7.5" fill="none" stroke="#fff" />
      <g fontWeight="600">
        <rect x="2444" y="935" width="43" height="21" rx="1" fill="#363a45" />
        <text x="2452" y="950" fill="#fff">893.5</text>
      </g>
      <PriceTag y={1267} bg="#fff" fg="#0f0f0f" text="501.8" />
      <PriceTag y={1340} bg="#ffeb3b" fg="#0f0f0f" text="415.0" />

      {/* time scale */}
      <rect x="58" y="1372" width="2451" height="25" fill="#000" />
      <path d="M58 1371.5H2509M2443.5 82V1397" stroke="#8a8a8a" />
      {MONTHS.map(([x, t]) => (
        <text key={x} x={x} y="1389" textAnchor="middle" fontWeight={t.startsWith('20') ? 700 : 400}>
          {t}
        </text>
      ))}
      <rect x="2136" y="1371" width="77" height="24" rx="1" fill="#363a45" />
      <text x="2174" y="1390" textAnchor="middle" fill="#fff" fontWeight="600">4月 13 (月)</text>
      <path d="M2474 1379h7l4 6.5-4 6.5h-7l-4-6.500z" fill="none" stroke="#dbdbdb" strokeWidth="1.3" />
      <circle cx="2477.5" cy="1385.5" r="2.5" fill="none" stroke="#dbdbdb" strokeWidth="1.3" />
    </svg>
  );
}

function Legend() {
  return (
    <div className="absolute top-1 left-[7px] flex h-[22px] items-center text-[16px] whitespace-nowrap">
      <svg viewBox="0 0 18 18" className="mr-1 h-[18px] w-[18px]">
        <circle cx="9" cy="9" r="9" fill="#f0f3fa" />
        {mark('S', '#0a64b8', 13)}
      </svg>
      サンリオ · 1日 · TSE
      <svg viewBox="0 0 12 12" className="ml-2.5 h-3 w-3" fill="#ff5252">
        <path d="M0 0h12L9 6l3 6H0z" />
      </svg>
      <span className="mr-2 ml-2.5 flex h-[18px] w-[18px] items-center justify-center rounded-full bg-[#2a2a2a]">
        <span className="h-1 w-[10px] rounded-sm bg-[#dbdbdb]" />
      </span>
      <span className="text-[13px]">出来高</span>
      <span className="text-[13px] text-[#089981]">15.57M</span>
    </div>
  );
}

export default function App() {
  return (
    <div className="flex h-screen flex-col overflow-hidden bg-[#2e2e2e] font-['Open_Sans','Noto_Sans_CJK_JP',sans-serif] text-[#dbdbdb]">
      <TabBar />
      <Toolbar />
      <div className="mt-1 flex min-h-0 flex-1 gap-1">
        <LeftBar />
        <main className="flex min-w-0 flex-1 flex-col">
          <section className="relative min-h-0 flex-1 overflow-hidden rounded-sm border-2 border-[#8f8f8f] bg-black">
            <Chart />
            <Legend />
          </section>
          <BottomBar />
        </main>
        <RightBar />
      </div>
      <div className="h-0.5 shrink-0 bg-[#1f1f1f]">
        <div className="ml-[196px] h-full w-11 bg-[#4a4a4a]" />
      </div>
    </div>
  );
}
